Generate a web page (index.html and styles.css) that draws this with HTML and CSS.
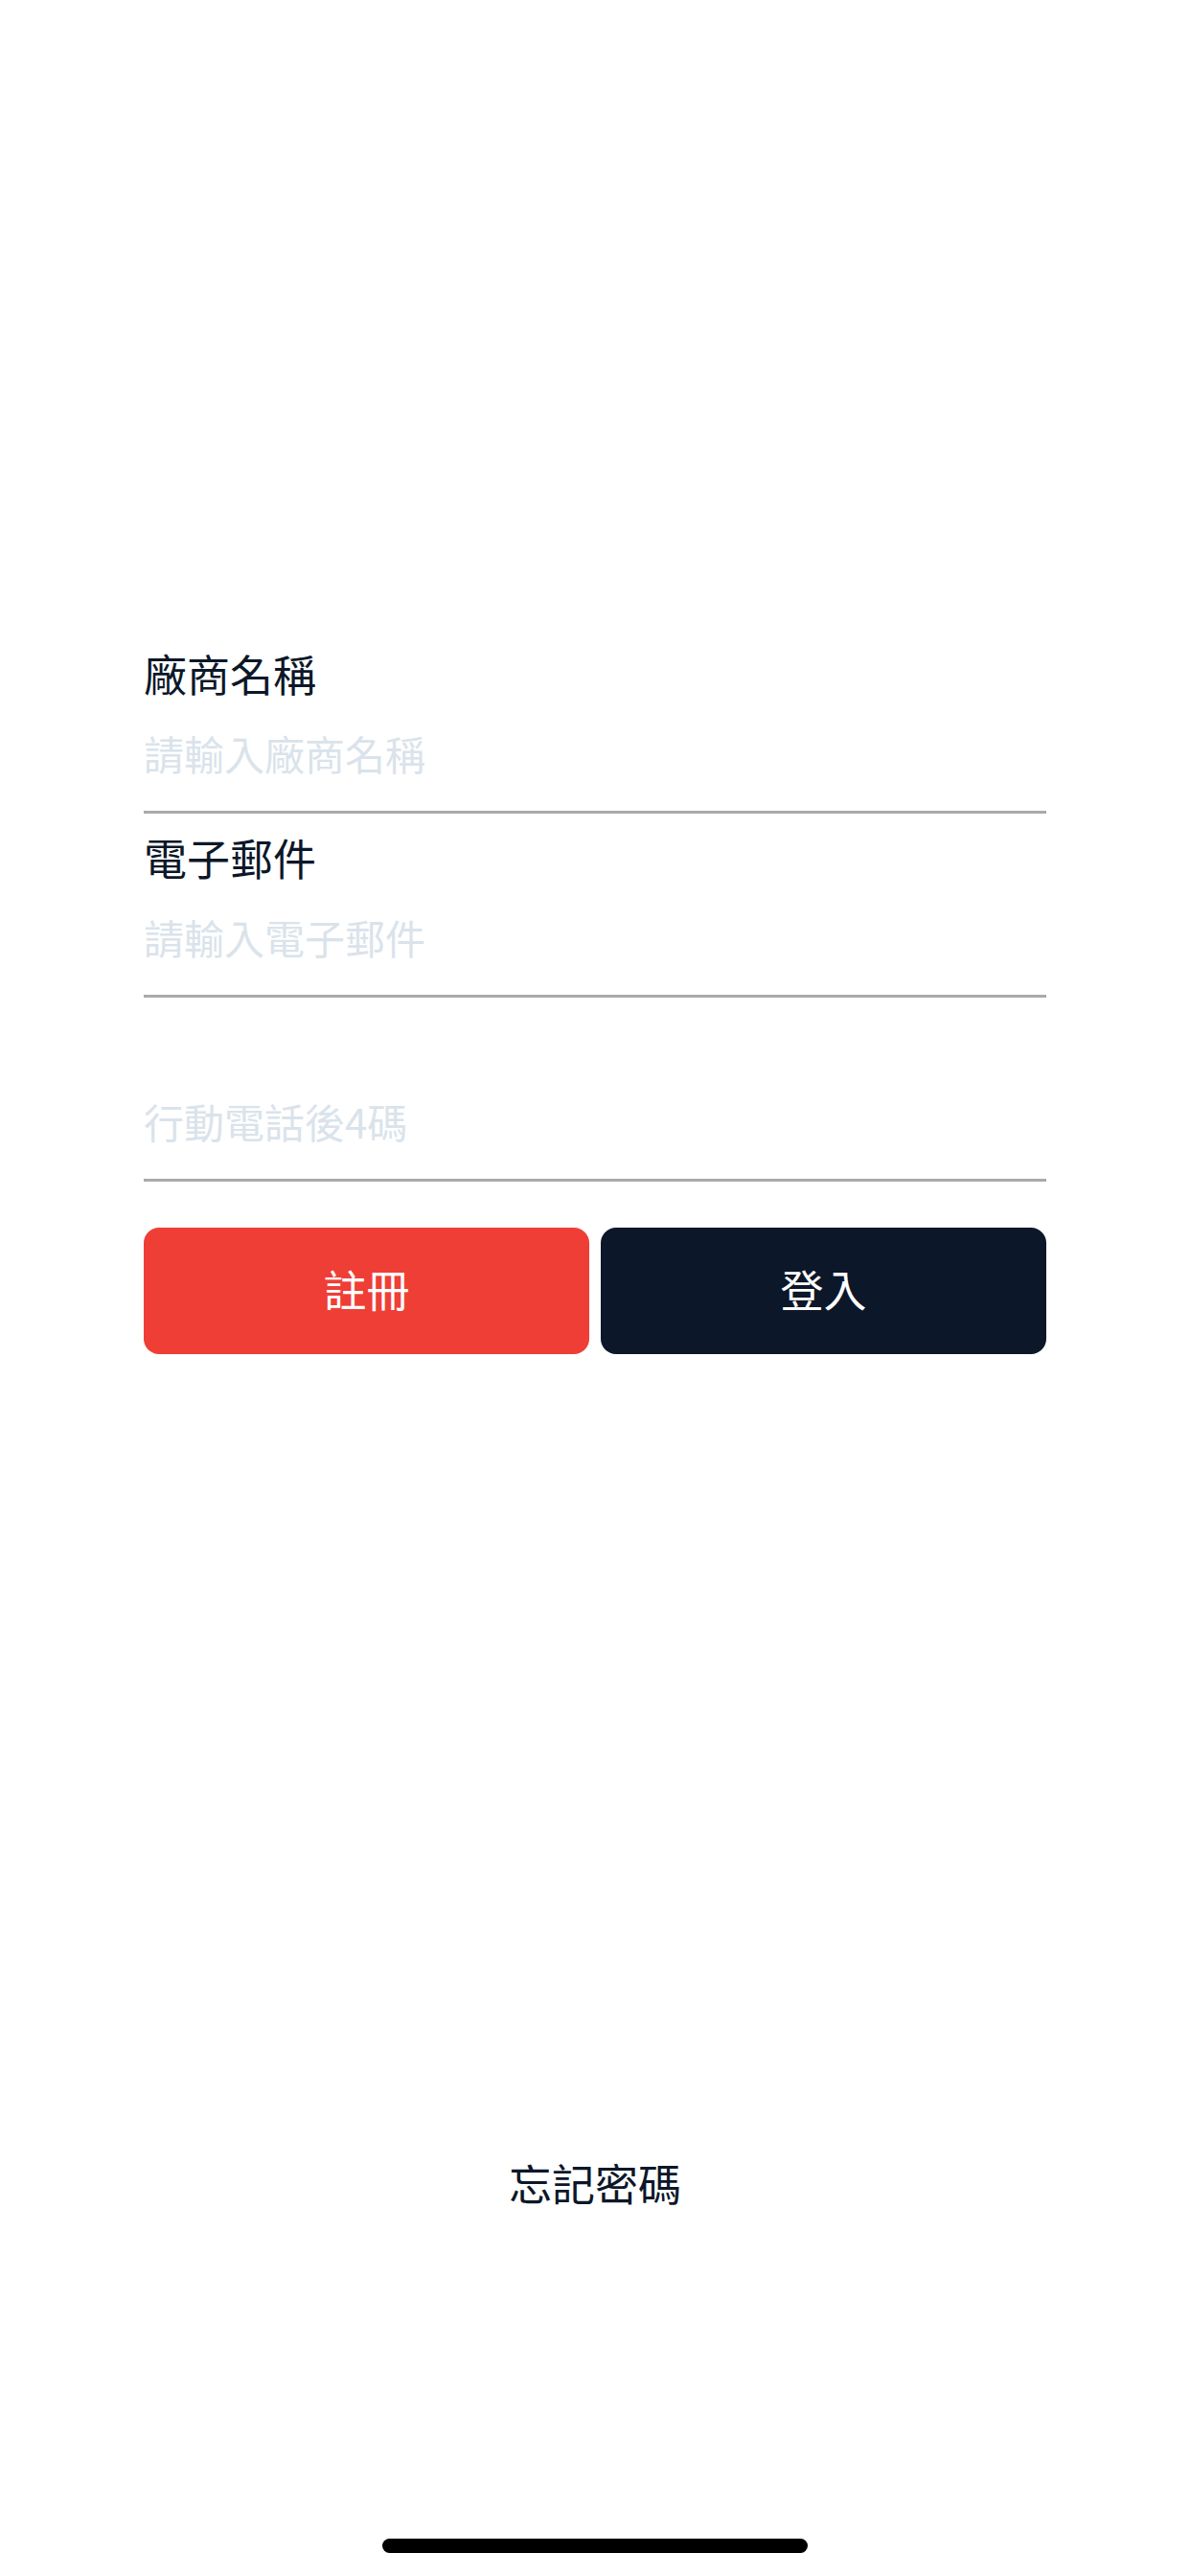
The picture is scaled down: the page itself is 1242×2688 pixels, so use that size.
FILE: index.html
```html
<!DOCTYPE html>
<html lang="zh-Hant">
<head>
    <meta charset="UTF-8">
    <meta name="viewport" content="width=device-width, initial-scale=1.0">
    <title>廠商登入</title>
    <link rel="stylesheet" href="styles.css">
</head>
<body>
    <div class="screen">
        <form class="login-form" onsubmit="return false">
            <div class="field">
                <label class="field-label" for="vendorName">廠商名稱</label>
                <input class="field-input" type="text" id="vendorName" placeholder="請輸入廠商名稱">
            </div>
            <div class="field">
                <label class="field-label" for="email">電子郵件</label>
                <input class="field-input" type="email" id="email" placeholder="請輸入電子郵件">
            </div>
            <div class="field">
                <label class="field-label" for="phone"></label>
                <input class="field-input" type="password" id="phone" placeholder="行動電話後4碼">
            </div>

            <div class="actions">
                <button type="button" class="btn btn-register">註冊</button>
                <button type="submit" class="btn btn-login">登入</button>
            </div>
        </form>

        <a class="forgot" href="#">忘記密碼</a>

        <div class="home-indicator"></div>
    </div>
</body>
</html>
```

FILE: styles.css
```css
body {
    margin: 0;
    background-color: #fff;
    font-family: "Noto Sans CJK TC", "Noto Sans", sans-serif;
    color: #0c1729;
}
.screen {
    width: 1242px;
    height: 2688px;
    display: flex;
    flex-direction: column;
    align-items: center;
    box-sizing: border-box;
    padding-top: 657px;
}
.login-form {
    width: 942px;
}
.field {
    display: flex;
    flex-direction: column;
    padding-top: 19px;
    border-bottom: 3px solid #aaaaaa;
}
.field-label {
    height: 54px;
    line-height: 54px;
    font-size: 45px;
    color: #0c1729;
}
.field-input {
    box-sizing: border-box;
    height: 116px;
    padding: 0 0 6px 0;
    margin: 0;
    border: none;
    outline: none;
    background: transparent;
    font-family: inherit;
    font-size: 42px;
    color: #0c1729;
}
.field-input::placeholder {
    color: #dae3eb;
}
.actions {
    display: flex;
    gap: 12px;
    margin-top: 48px;
}
.btn {
    flex: 1;
    height: 132px;
    padding: 0 0 5px 0;
    border: none;
    border-radius: 16px;
    font-family: inherit;
    font-size: 45px;
    color: #fff;
    cursor: pointer;
}
.btn-register {
    background-color: #ef3e36;
}
.btn-login {
    background-color: #0c1729;
}
.forgot {
    margin-top: 838px;
    height: 54px;
    line-height: 54px;
    font-size: 45px;
    color: #0c1729;
    text-decoration: none;
}
.home-indicator {
    width: 444px;
    height: 15px;
    margin-top: 344px;
    border-radius: 8px;
    background-color: #000;
}
```
